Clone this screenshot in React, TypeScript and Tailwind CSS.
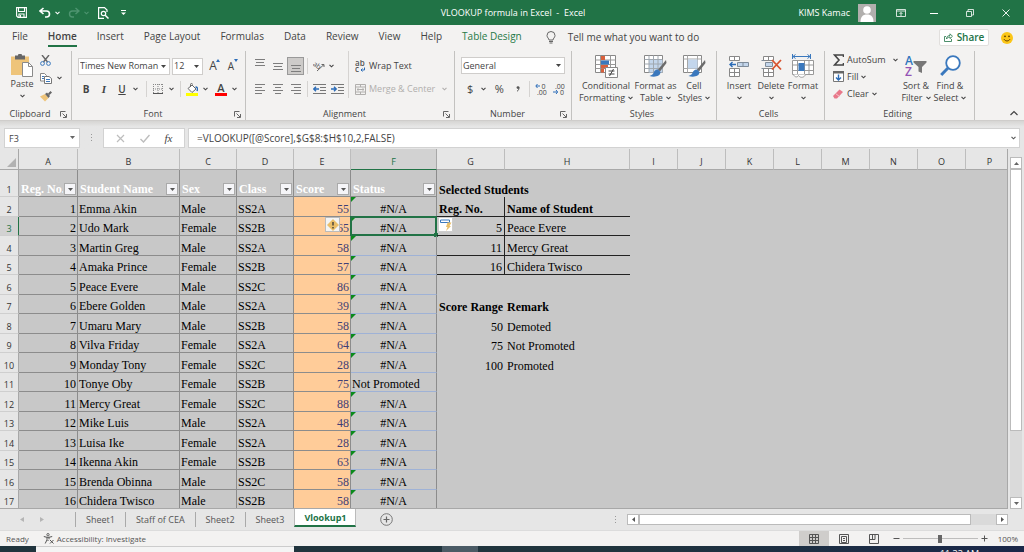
import type { ReactNode } from "react";
import { clsx } from "clsx";

type Student = [name: string, sex: string, cls: string, score: number];

const students: Student[] = [
  ["Emma Akin", "Male", "SS2A", 55],
  ["Udo Mark", "Female", "SS2B", 65],
  ["Martin Greg", "Male", "SS2A", 58],
  ["Amaka Prince", "Female", "SS2B", 57],
  ["Peace Evere", "Male", "SS2C", 86],
  ["Ebere Golden", "Male", "SS2A", 39],
  ["Umaru Mary", "Male", "SS2B", 58],
  ["Vilva Friday", "Female", "SS2A", 64],
  ["Monday Tony", "Female", "SS2C", 28],
  ["Tonye Oby", "Female", "SS2B", 75],
  ["Mercy Great", "Female", "SS2C", 88],
  ["Mike Luis", "Male", "SS2A", 48],
  ["Luisa Ike", "Female", "SS2A", 28],
  ["Ikenna Akin", "Female", "SS2B", 63],
  ["Brenda Obinna", "Male", "SS2C", 58],
  ["Chidera Twisco", "Male", "SS2B", 58],
];

// G/H values by sheet row
const side: Record<number, [string, string]> = {
  2: ["Reg. No.", "Name of Student"],
  3: ["5", "Peace Evere"],
  4: ["11", "Mercy Great"],
  5: ["16", "Chidera Twisco"],
  7: ["Score Range", "Remark"],
  8: ["50", "Demoted"],
  9: ["75", "Not Promoted"],
  10: ["100", "Promoted"],
};

const columns = [
  { id: "A", width: "w-[59px]" },
  { id: "B", width: "w-[102px]" },
  { id: "C", width: "w-[57px]" },
  { id: "D", width: "w-[57px]" },
  { id: "E", width: "w-[57px]" },
  { id: "F", width: "w-[86px]" },
  { id: "G", width: "w-[68px]" },
  { id: "H", width: "w-[125px]" },
  { id: "I", width: "w-[48px]" },
  { id: "J", width: "w-[48px]" },
  { id: "K", width: "w-[48px]" },
  { id: "L", width: "w-[48px]" },
  { id: "M", width: "w-[48px]" },
  { id: "N", width: "w-[48px]" },
  { id: "O", width: "w-[48px]" },
  { id: "P", width: "w-[48px]" },
];

const tableHeads = ["Reg. No.", "Student Name", "Sex", "Class", "Score", "Status"];
const ribbonTabs = ["File", "Home", "Insert", "Page Layout", "Formulas", "Data", "Review", "View", "Help", "Table Design"];
const sheets = ["Sheet1", "Staff of CEA", "Sheet2", "Sheet3"];

function Svg({ w, h, children, className }: { w: number; h: number; children: ReactNode; className?: string }) {
  return (
    <svg width={w} height={h} viewBox={`0 0 ${w} ${h}`} fill="none" className={clsx("shrink-0", className)} aria-hidden="true">
      {children}
    </svg>
  );
}

function Chevron({ className }: { className?: string }) {
  return (
    <Svg w={5} h={4} className={className}>
      <path d="M.5 .8 2.5 2.8 4.5 .8" stroke="currentColor" strokeWidth="1.1" />
    </Svg>
  );
}

function Triangle({ className }: { className?: string }) {
  return (
    <Svg w={5} h={3} className={className}>
      <path d="M0 0h5L2.5 3z" fill="currentColor" />
    </Svg>
  );
}

function IconButton({ label, children, className }: { label: string; children: ReactNode; className?: string }) {
  return (
    <button type="button" aria-label={label} className={clsx("flex shrink-0 items-center justify-center", className)}>
      {children}
    </button>
  );
}

function Launcher() {
  return (
    <Svg w={7} h={7}>
      <path d="M.5 5.5v-5h5M2.5 2.5l3.5 3.5M6.5 3v3.5H3" stroke="#555" strokeWidth=".9" />
    </Svg>
  );
}

function Group({ label, width, launcher, children }: { label: string; width: string; launcher?: boolean; children: ReactNode }) {
  return (
    <section aria-label={label} className={clsx("flex shrink-0 flex-col border-r border-[#c3c2c0]", width)}>
      <div className="flex flex-1 items-start">{children}</div>
      <div className="flex h-3 items-center pr-1">
        <span className="flex-1 text-center">{label}</span>
        {launcher && (
          <IconButton label={`${label} settings`}>
            <Launcher />
          </IconButton>
        )}
      </div>
    </section>
  );
}

function Sep() {
  return <span className="h-4 w-px shrink-0 bg-[#d5d3d1]" />;
}

function Lines({ d }: { d: string }) {
  return (
    <Svg w={12} h={10}>
      <path d={d} stroke="#7d7d7d" />
    </Svg>
  );
}

function Indent({ flip }: { flip?: boolean }) {
  return (
    <Svg w={13} h={11}>
      <path d="M0 .5h13M7 3.5h6M7 6.5h6M0 9.5h13" stroke="#777" />
      <path d={flip ? "M0 5h5M3 2.8 5.2 5 3 7.2" : "M1 5h5M3 2.8.8 5 3 7.2"} stroke="#2b6cb8" strokeWidth="1.4" />
    </Svg>
  );
}

function BigButton({ top, bottom, icon, className }: { top: string; bottom?: string; icon: ReactNode; className: string }) {
  return (
    <button type="button" className={clsx("flex shrink-0 flex-col items-center leading-3", className)}>
      <span className="flex h-6 items-center">{icon}</span>
      <span className="mt-[2px] whitespace-nowrap">{top}</span>
      <span className="flex h-3 items-center gap-[3px] whitespace-nowrap">
        {bottom}
        <Chevron />
      </span>
    </button>
  );
}

function TitleBar() {
  return (
    <header className="flex h-[25px] shrink-0 items-center bg-[#217346] text-white">
      <div className="flex flex-1 items-center pl-4">
        <IconButton label="Save">
          <Svg w={11} h={11}>
            <path d="M.6.6h9.8v9.8H2L.6 9zM2.5 1v3.500h6V1M3 10V7h5v3M4.500 8v2" stroke="#fff" strokeWidth="1.1" />
          </Svg>
        </IconButton>
        <IconButton label="Undo" className="ml-3 gap-1">
          <Svg w={12} h={11}>
            <path d="M4.5 1 1 4l3.500 3M1.200 4H7.500a3 3 0 0 1 0 6H6" stroke="#fff" strokeWidth="1.6" />
          </Svg>
          <Chevron />
        </IconButton>
        <IconButton label="Redo" className="ml-2 gap-1 text-[#4e9470]">
          <Svg w={12} h={11}>
            <path d="M7.5 1 11 4 7.500 7M10.800 4H4.500a3 3 0 0 0 0 6H6" stroke="currentColor" strokeWidth="1.4" />
          </Svg>
          <Chevron />
        </IconButton>
        <IconButton label="Print Preview" className="ml-2">
          <Svg w={12} h={12}>
            <path d="M10 5V3L7.500.6H1.600v10.800H7" stroke="#fff" strokeWidth="1.2" />
            <circle cx="6.5" cy="6.5" r="2.2" stroke="#fff" strokeWidth="1.2" />
            <path d="m8.200 8.200 3.300 3.300" stroke="#fff" strokeWidth="1.5" />
          </Svg>
        </IconButton>
        <IconButton label="Customize toolbar" className="ml-3">
          <Svg w={5} h={6}>
            <path d="M0 .5h5" stroke="#fff" />
            <path d="M0 2.5h5L2.500 5z" fill="#fff" />
          </Svg>
        </IconButton>
      </div>
      <h1 className="text-[9px]">VLOOKUP formula in Excel&nbsp; -&nbsp; Excel</h1>
      <div className="flex flex-1 items-center justify-end pr-[14px]">
        <span className="mr-2 text-[9px]">KIMS Kamac</span>
        <Svg w={18} h={18} className="mr-5">
          <rect width="18" height="18" fill="#b1afad" />
          <circle cx="9" cy="6" r="3.8" fill="#fff" />
          <path d="M2.500 18c0-5 2-7.500 6.500-7.500s6.500 2.500 6.500 7.500z" fill="#fff" />
        </Svg>
        <IconButton label="Ribbon display options" className="mr-6">
          <Svg w={10} h={8}>
            <path d="M.5.5h9v7h-9zM.5 2h9M5 7V3.500M3.500 5 5 3.500 6.500 5" stroke="#fff" strokeWidth=".8" />
          </Svg>
        </IconButton>
        <IconButton label="Minimize" className="mr-7">
          <Svg w={8} h={8}>
            <path d="M0 4.500h8" stroke="#fff" />
          </Svg>
        </IconButton>
        <IconButton label="Restore" className="mr-7">
          <Svg w={8} h={8}>
            <path d="M.5 2.500h5v5h-5zM2 2.500V.5h5.500V6H5.500" stroke="#fff" strokeWidth=".8" />
          </Svg>
        </IconButton>
        <IconButton label="Close">
          <Svg w={8} h={8}>
            <path d="m.5.5 7 7m0-7-7 7" stroke="#fff" strokeWidth=".9" />
          </Svg>
        </IconButton>
      </div>
    </header>
  );
}

function TabBar() {
  return (
    <nav className="flex h-[25px] shrink-0 items-center pr-2 pl-3 text-[10px]">
      <div className="flex gap-5">
        {ribbonTabs.map((t) => (
          <button
            key={t}
            type="button"
            className={clsx(
              "h-[19px] border-b-2 whitespace-nowrap",
              t === "Home" ? "border-[#217346] font-semibold text-[#444]" : "border-transparent",
              t === "Table Design" && "text-[#1f7a47]"
            )}
          >
            {t}
          </button>
        ))}
      </div>
      <button type="button" className="ml-6 flex items-center gap-3 whitespace-nowrap">
        <Svg w={10} h={13}>
          <path d="M3 9C3 7.500 1 6.500 1 4.500a4 4 0 0 1 8 0C9 6.500 7 7.500 7 9zM3 10.500h4M3.500 12h3" stroke="#666" />
        </Svg>
        Tell me what you want to do
      </button>
      <button
        type="button"
        className="ml-auto flex h-[17px] w-[50px] items-center justify-center gap-1 rounded-xs border border-[#e1dfdd] bg-white font-semibold text-[#217346]"
      >
        <Svg w={9} h={9}>
          <path d="M2 3.500H.5v5h7V6M2.500 6c0-2.500 1.500-3.500 3.500-3.500V.8L8.500 3.300 6 5.600V4C4.500 4 3.300 4.500 2.500 6z" stroke="#217346" strokeWidth=".8" />
        </Svg>
        Share
      </button>
      <IconButton label="Feedback" className="mr-[3px] ml-3">
        <Svg w={12} h={12}>
          <circle cx="6" cy="6" r="6" fill="#fbc618" />
          <circle cx="4" cy="4.3" r=".9" fill="#5b3b00" />
          <circle cx="8" cy="4.3" r=".9" fill="#5b3b00" />
          <path d="M3 7.200c1.500 2.300 4.500 2.300 6 0" stroke="#5b3b00" />
        </Svg>
      </IconButton>
    </nav>
  );
}

function Ribbon() {
  return (
    <div className="flex h-[70px] shrink-0 overflow-hidden pt-px text-[9px]">
      <Group label="Clipboard" width="w-[72px]" launcher>
        <button type="button" aria-label="Paste" className="ml-1 flex w-9 flex-col items-center pt-[3px]">
          <Svg w={22} h={23}>
            <path d="M0 2.500h18V21H0z" fill="#eec47a" />
            <path d="M4 1.500h3a2 2 0 0 1 4 0h3v4H4z" fill="#666" />
            <path d="M11.500 8.500h6l4 4v10h-10z" fill="#fff" stroke="#8a8a8a" />
            <path d="M17.500 8.500v4h4" stroke="#8a8a8a" />
          </Svg>
          <span className="mt-px leading-3">Paste</span>
          <Chevron className="mt-1" />
        </button>
        <div className="flex flex-col items-start gap-1 pt-[3px]">
          <IconButton label="Cut" className="h-[13px]">
            <Svg w={11} h={11}>
              <path d="m2 0 5.500 7M9 0 3.500 7" stroke="#666" strokeWidth="1.4" />
              <circle cx="2.5" cy="8.5" r="1.9" stroke="#3a78bd" />
              <circle cx="8.5" cy="8.5" r="1.9" stroke="#3a78bd" />
            </Svg>
          </IconButton>
          <IconButton label="Copy" className="h-[14px] gap-[5px]">
            <Svg w={12} h={11}>
              <path d="M.5.5h4l2 2V8h-6z" fill="#fff" stroke="#888" />
              <path d="M4.500 3.500H9l2.500 2v5h-7z" fill="#fff" stroke="#777" />
              <path d="M6 6.500h4M6 8.500h4M2 3.500h2M2 5.500h2" stroke="#3a78bd" />
            </Svg>
            <Chevron />
          </IconButton>
          <IconButton label="Format Painter" className="h-[14px]">
            <Svg w={12} h={11}>
              <path d="M0 5.500 5 3l3.500 4L5 10.500z" fill="#eec47a" />
              <path d="m5 3 2-1.500L10 5 8.500 7zM8 2.500 10.500 0 12 1.500 9.500 4z" fill="#666" />
            </Svg>
          </IconButton>
        </div>
      </Group>

      <Group label="Font" width="w-[174px]" launcher>
        <div className="flex flex-col gap-[5px] pt-[6px] pl-[6px]">
          <div className="flex h-[18px] items-center">
            <div className="relative flex">
              <select aria-label="Font name" className="h-[17px] w-[92px] appearance-none border border-[#cfcdcb] bg-white pl-px text-[9px]">
                <option>Times New Roman</option>
              </select>
              <Triangle className="pointer-events-none absolute top-[7px] right-1" />
            </div>
            <div className="relative ml-[2px] flex">
              <select aria-label="Font size" className="h-[17px] w-[31px] appearance-none border border-[#cfcdcb] bg-white pl-px text-[9px]">
                <option>12</option>
              </select>
              <Triangle className="pointer-events-none absolute top-[7px] right-1" />
            </div>
            <IconButton label="Increase font size" className="relative ml-1 w-3 text-[12px]">
              A
              <Svg w={4} h={3} className="absolute top-[2px] -right-px">
                <path d="M2 0l2 3H0z" fill="#2b6cb8" />
              </Svg>
            </IconButton>
            <IconButton label="Decrease font size" className="relative ml-[6px] w-3 text-[10px]">
              A
              <Svg w={4} h={3} className="absolute top-0 -right-px">
                <path d="M0 0h4L2 3z" fill="#2b6cb8" />
              </Svg>
            </IconButton>
          </div>
          <div className="flex h-[18px] items-center pl-1">
            <button type="button" className="w-2 text-[10px] font-bold">B</button>
            <button type="button" className="ml-[10px] w-2 font-['Liberation_Serif',serif] text-[11px] font-bold italic">I</button>
            <button type="button" className="ml-[10px] w-2 text-[10px] font-semibold underline">U</button>
            <Chevron className="ml-[7px]" />
            <span className="w-2" />
            <Sep />
            <IconButton label="Borders" className="ml-[6px] gap-[6px]">
              <Svg w={10} h={10}>
                <path d="M.5 0v9M9.500 0v9M5 0v9M0 .5h10M0 5h10" stroke="#888" strokeDasharray="1 1" />
                <path d="M0 9.500h10" stroke="#555" />
              </Svg>
              <Chevron />
            </IconButton>
            <span className="w-[6px]" />
            <Sep />
            <IconButton label="Fill Color" className="ml-[5px] gap-[5px]">
              <Svg w={12} h={13}>
                <path d="m2 5.500 4-3.500 4 4-4 3.500z" fill="#fff" stroke="#666" />
                <path d="M4.500 4V1.500a1 1 0 0 1 2 0" stroke="#666" />
                <path d="M9.500 4c2 0 2.500 1.500 1.500 4" stroke="#2b6cb8" strokeWidth="1.4" />
                <path d="M0 10h12v3H0z" fill="#ffff00" />
              </Svg>
              <Chevron />
            </IconButton>
            <IconButton label="Font Color" className="ml-[7px] gap-[5px]">
              <span className="flex h-[13px] w-3 items-center justify-center border-b-3 border-[#ff0000] text-[11px] leading-none font-semibold">A</span>
              <Chevron />
            </IconButton>
          </div>
        </div>
      </Group>

      <Group label="Alignment" width="w-[209px]" launcher>
        <div className="flex flex-col gap-[5px] pt-[6px] pl-[5px]">
          <div className="flex h-[18px] items-center">
            <IconButton label="Top Align" className="h-[18px] w-[18px] items-start pt-[2px]">
              <Lines d="M1 .5h10M2 3.5h8M1 6.5h10" />
            </IconButton>
            <IconButton label="Middle Align" className="w-[18px]">
              <Lines d="M1 2.500h10M2 5.500h8M1 8.500h10" />
            </IconButton>
            <IconButton label="Bottom Align" className="h-[18px] w-[17px] items-end border border-[#999] bg-[#cdcbc9] pb-[2px]">
              <Lines d="M1 3.500h10M2 6.500h8M1 9.500h10" />
            </IconButton>
            <span className="w-[3px]" />
            <Sep />
            <IconButton label="Orientation" className="ml-[5px] gap-1">
              <Svg w={12} h={12}>
                <text x="0" y="7" fontSize="7" fill="#555" transform="rotate(35 3 5)">ab</text>
                <path d="M4 11 11 4.500M8.500 4.500H11V7" stroke="#666" />
              </Svg>
              <Chevron />
            </IconButton>
          </div>
          <div className="flex h-[18px] items-center">
            <IconButton label="Align Left" className="w-[18px]">
              <Lines d="M1 .5h10M1 3.500h7M1 6.500h10M1 9.500h7" />
            </IconButton>
            <IconButton label="Center" className="w-[18px]">
              <Lines d="M1 .5h10M3 3.500h6M1 6.500h10M3 9.500h6" />
            </IconButton>
            <IconButton label="Align Right" className="w-[17px]">
              <Lines d="M1 .5h10M4 3.500h7M1 6.500h10M4 9.500h7" />
            </IconButton>
            <span className="w-[3px]" />
            <Sep />
            <IconButton label="Decrease Indent" className="ml-[5px]">
              <Indent />
            </IconButton>
            <IconButton label="Increase Indent" className="ml-[5px]">
              <Indent flip />
            </IconButton>
          </div>
        </div>
        <div className="ml-1 flex flex-col gap-[5px] border-l border-[#d5d3d1] pt-[6px] pl-[6px]">
          <button type="button" className="flex h-[18px] items-center gap-[3px] whitespace-nowrap">
            <Svg w={11} h={13}>
              <text x="0" y="6" fontSize="8" fontWeight="600" fill="#555">ab</text>
              <text x="0" y="12" fontSize="8" fontWeight="600" fill="#555">c</text>
              <path d="M9.500 7.500V10H6M7.500 8.500 6 10l1.500 1.500" stroke="#2b6cb8" />
            </Svg>
            Wrap Text
          </button>
          <button type="button" disabled className="flex h-[18px] items-center gap-[3px] whitespace-nowrap text-[#b1afad]">
            <Svg w={11} h={11}>
              <path d="M.5.5h10v10H.5zM.5 3h10M.5 8h10M5.500.5V3M5.500 8v2.500M2 5.500h7M3.500 4.300 2 5.500l1.500 1.200M7.500 4.300 9 5.500 7.500 6.700" stroke="currentColor" />
            </Svg>
            Merge &amp; Center
            <Chevron className="ml-1" />
          </button>
        </div>
      </Group>

      <Group label="Number" width="w-[117px]" launcher>
        <div className="flex flex-1 flex-col gap-[5px] px-[6px] pt-[6px]">
          <div className="relative flex h-[18px]">
            <select aria-label="Number format" className="h-[17px] w-full appearance-none border border-[#cfcdcb] bg-white pl-px text-[9px]">
              <option>General</option>
            </select>
            <Triangle className="pointer-events-none absolute top-[7px] right-1" />
          </div>
          <div className="flex h-[18px] items-center pl-[6px] text-[11px]">
            <IconButton label="Accounting format" className="gap-2">
              $<Chevron />
            </IconButton>
            <button type="button" className="ml-2 w-[10px]">%</button>
            <IconButton label="Comma Style" className="ml-3">
              <Svg w={4} h={6}>
                <circle cx="2" cy="1.6" r="1.4" fill="#555" />
                <path d="M3 1.500C3 3.500 2.300 4.500 1 5.300" stroke="#555" />
              </Svg>
            </IconButton>
            <span className="w-[9px]" />
            <Sep />
            <IconButton label="Increase Decimal" className="ml-[5px]">
              <Svg w={12} h={13}>
                <text x="6.5" y="5.5" fontSize="7" fill="#444">0</text>
                <text x="2" y="12" fontSize="7" fill="#444">.00</text>
                <path d="M1 3h4M2.500 1 .8 3l1.700 2" stroke="#2b6cb8" />
              </Svg>
            </IconButton>
            <IconButton label="Decrease Decimal" className="ml-[6px]">
              <Svg w={12} h={13}>
                <text x="2" y="5.5" fontSize="7" fill="#444">.00</text>
                <text x="7" y="12" fontSize="7" fill="#444">0</text>
                <path d="M0 9h4M3 7l1.700 2L3 11" stroke="#2b6cb8" />
              </Svg>
            </IconButton>
          </div>
        </div>
      </Group>

      <Group label="Styles" width="w-[145px]">
        <div className="flex pt-[3px] pl-[6px]">
          <BigButton
            className="w-[56px]"
            top="Conditional"
            bottom="Formatting"
            icon={
              <Svg w={23} h={23}>
                <path d="M.5.5h20v17H.5z" fill="#fff" stroke="#888" />
                <path d="M.5 5h20M.5 9.500h20M.5 13.500h20M5.500.5v17M15.500.5v17" stroke="#999" />
                <path d="M6 1h4v4H6zM6 10h7v3.500H6zM6 14h3v3.500H6z" fill="#d8603c" />
                <path d="M6 5.500h8v4H6z" fill="#3a78bd" />
                <path d="M10.500 12.500h12v10h-12z" fill="#fff" stroke="#888" />
                <path d="M13.500 16h6M13.500 19h6M18.500 14l-4 7" stroke="#444" />
              </Svg>
            }
          />
          <BigButton
            className="w-[43px]"
            top="Format as"
            bottom="Table"
            icon={
              <Svg w={23} h={22}>
                <path d="M.5.5h18v17H.5z" fill="#fff" stroke="#888" />
                <path d="M5 5h13.500v12.500H5z" fill="#c3d6ec" />
                <path d="M.5 4.500h18M.5 9h18M.5 13.500h18M5 .5v17M9.500.5v17M14 .5v17" stroke="#a0a8b0" />
                <path d="m22 5-8 9.500 2 2L22.500 8z" fill="#6b6b6b" />
                <path d="M14 14.500c-3 0-4 2-4.500 3.500-1 2-2.500 2.500-4 3 5 1.500 11 .5 11-4z" fill="#3a78bd" />
              </Svg>
            }
          />
          <BigButton
            className="w-[34px]"
            top="Cell"
            bottom="Styles"
            icon={
              <Svg w={23} h={22}>
                <path d="M.5.5h18v17H.5z" fill="#fff" stroke="#888" />
                <path d="M.5 4h18M.5 13.500h18M4.500.5v17M14.500.5v17" stroke="#a8a8a8" />
                <path d="M5 4.500h9.500v9H5z" fill="#c3d6ec" />
                <path d="m22 5-8 9.500 2 2L22.500 8z" fill="#6b6b6b" />
                <path d="M14 14.500c-3 0-4 2-4.500 3.500-1 2-2.500 2.500-4 3 5 1.500 11 .5 11-4z" fill="#3a78bd" />
              </Svg>
            }
          />
        </div>
      </Group>

      <Group label="Cells" width="w-[108px]">
        <div className="flex pt-[3px] pl-[6px]">
          <BigButton
            className="w-8"
            top="Insert"
            icon={
              <Svg w={20} h={21}>
                <path d="M.5.5h10v4H.5zM5.500.5v4M.5 12.500h10v8H.5zM.5 16.500h10M5.500 12.500v8" fill="#fff" stroke="#888" />
                <path d="M8.500 6.500h11v4h-11zM14 6.500v4" fill="#c3d6ec" stroke="#7f8c9a" />
                <path d="M1 8.500h6M3.500 6 1 8.500 3.500 11" stroke="#2b6cb8" strokeWidth="1.4" />
              </Svg>
            }
          />
          <BigButton
            className="w-8"
            top="Delete"
            icon={
              <Svg w={21} h={21}>
                <path d="M2.500.5h10v4h-10zM7.500.5v4M2.500 12.500h10v8h-10zM2.500 16.500h10M7.500 12.500v8" fill="#fff" stroke="#888" />
                <path d="M.5 4.500h3M.5 12.500h3M4.500 6.500h7v4h-7z" fill="#c3d6ec" stroke="#7f8c9a" />
                <path d="m11 4 9 9.500M20 4l-9 9.500" stroke="#d8532f" strokeWidth="1.8" />
              </Svg>
            }
          />
          <BigButton
            className="w-8"
            top="Format"
            icon={
              <Svg w={22} h={24}>
                <path d="M1 2.500h17M3.500.5 1 2.500l2.500 2M15.500.5l2.500 2-2.500 2M.5 0v5M18.500 0v5" stroke="#3a78bd" />
                <path d="M.5 6.500h21v14H.5zM.5 11h21M.5 16.500h21M5.500 6.500v14M12.500 6.500v14M17 6.500v14" fill="#fff" stroke="#999" />
                <path d="M6.500 9h6v8h-6z" fill="#3a78bd" />
                <path d="M1.500 20.500c1 3 4 3 5 1 2 3 6 2 7-1" fill="#fff" stroke="#999" />
              </Svg>
            }
          />
        </div>
      </Group>

      <Group label="Editing" width="w-[150px]">
        <div className="flex w-[73px] flex-col items-start pl-2 leading-none">
          <button type="button" className="flex h-[17px] w-full items-center whitespace-nowrap">
            <Svg w={11} h={12} className="mr-[3px]">
              <path d="M10.500 3V1H1.500L6 6l-4.500 5h9V9" stroke="#444" strokeWidth="1.6" />
            </Svg>
            AutoSum
            <Chevron className="ml-auto" />
          </button>
          <button type="button" className="flex h-[17px] items-center gap-[3px]">
            <Svg w={11} h={11}>
              <path d="M.5.5h10v10H.5z" fill="#fff" stroke="#777" />
              <path d="M0 0h11v2.500H0z" fill="#666" />
              <path d="M5.500 3.500V9M3 6.500 5.500 9 8 6.500" stroke="#2b6cb8" strokeWidth="1.4" />
            </Svg>
            Fill
            <Chevron />
          </button>
          <button type="button" className="flex h-[17px] items-center gap-[3px]">
            <Svg w={11} h={10}>
              <path d="M0 7 6.500.5 10 3 4 9.500H1.500z" fill="#e8788a" />
              <path d="m2.500 4.500 4 3" stroke="#f6c3cb" />
            </Svg>
            Clear
            <Chevron />
          </button>
        </div>
        <div className="flex gap-px pt-[3px] pl-[2px]">
          <BigButton
            className="w-8"
            top="Sort &"
            bottom="Filter"
            icon={
              <Svg w={22} h={22}>
                <text x="0" y="9.5" fontSize="12" fontWeight="600" fill="#2f75bd">A</text>
                <text x="0" y="20.5" fontSize="12" fontWeight="600" fill="#9353b5">Z</text>
                <path d="M8.500 6h13v1.500L17 12v6l-3.500-1.500V12L8.500 7.500z" fill="#777" />
              </Svg>
            }
          />
          <BigButton
            className="w-[34px]"
            top="Find &"
            bottom="Select"
            icon={
              <Svg w={21} h={22}>
                <circle cx="13" cy="8" r="6.8" fill="#fff" stroke="#3a78bd" strokeWidth="1.8" />
                <path d="M8 13 1.200 20" stroke="#3a78bd" strokeWidth="3" />
              </Svg>
            }
          />
        </div>
      </Group>

      <div className="flex flex-1 items-end justify-end pr-[6px] pb-1">
        <IconButton label="Collapse the Ribbon">
          <Svg w={8} h={6}>
            <path d="m.5 5 3.500-3.500L7.500 5" stroke="#444" strokeWidth="1.2" />
          </Svg>
        </IconButton>
      </div>
    </div>
  );
}

function FormulaBar() {
  return (
    <div className="flex h-[29px] shrink-0 items-end border-t border-[#cfcdcb] bg-linear-to-b from-[#d6d5d3] to-[#e6e6e6] to-20% pr-1 pb-px pl-1 text-[9px]">
      <div className="relative flex h-5 w-[76px]">
        <input aria-label="Name Box" defaultValue="F3" className="h-5 w-full border border-[#d2d2d2] bg-white px-1" />
        <Triangle className="absolute top-2 right-[5px] text-[#666]" />
      </div>
      <Svg w={3} h={20} className="mx-[10px]">
        <path d="M1.500 6v9" stroke="#999" strokeDasharray="1 2" />
      </Svg>
      <div className="flex h-5 w-[82px] items-center justify-around border border-[#d2d2d2] bg-white px-1">
        <IconButton label="Cancel">
          <Svg w={9} h={9}>
            <path d="m1 1 7 7m0-7L1 8" stroke="#bdbdbd" strokeWidth="1.2" />
          </Svg>
        </IconButton>
        <IconButton label="Enter">
          <Svg w={10} h={9}>
            <path d="m.5 5 3 3L9.500 1" stroke="#bdbdbd" strokeWidth="1.4" />
          </Svg>
        </IconButton>
        <button type="button" className="font-['Liberation_Serif',serif] text-[11px] leading-none italic">
          fx
        </button>
      </div>
      <div className="relative ml-[3px] flex h-5 flex-1">
        <input
          aria-label="Formula Bar"
          defaultValue="=VLOOKUP([@Score],$G$8:$H$10,2,FALSE)"
          className="h-5 w-full border border-[#d2d2d2] bg-white px-2 text-[10px]"
        />
        <Chevron className="absolute top-2 right-1 text-[#555]" />
      </div>
    </div>
  );
}

function ErrorMark() {
  return (
    <Svg w={5} h={5} className="absolute top-0 left-0">
      <path d="M0 0h5L0 5z" fill="#0a8a1c" />
    </Svg>
  );
}

function RowHead({ n }: { n: number }) {
  return (
    <th
      scope="row"
      className={clsx(
        "border-r border-b border-b-[#cfcfcf] p-0 text-center align-bottom font-['Open_Sans',sans-serif] text-[9px] leading-3 font-normal",
        n === 3 ? "border-r-[#217346] bg-[#d2d2d2] text-[#217346]" : "border-r-[#a8a8a8] bg-[#e6e6e6] text-[#333]"
      )}
    >
      {n}
    </th>
  );
}

const grid = "border-r border-b border-[#8c8c8c] px-px py-0 align-bottom whitespace-nowrap";

function SheetRow({ n, student }: { n: number; student: Student }) {
  const [name, sex, cls, score] = student;
  const [left, right] = side[n] ?? ["", ""];
  const boxed = n >= 2 && n <= 5;
  const bold = n === 2 || n === 7;
  const promoted = n === 11;
  return (
    <tr className={n % 2 === 0 ? "h-5" : "h-[19px]"}>
      <RowHead n={n} />
      <td className={clsx(grid, "text-right")}>{n - 1}</td>
      <td className={grid}>{name}</td>
      <td className={grid}>{sex}</td>
      <td className={grid}>{cls}</td>
      <td className={clsx(grid, "relative bg-[#ffcc99] text-right text-[#3f3f76]")}>
        {score}
        {n === 3 && (
          <button
            type="button"
            aria-label="Error options"
            className="absolute top-0 left-[31px] flex h-[15px] w-[15px] items-center justify-center border border-[#bbb] bg-[#f4f4f4]"
          >
            <Svg w={12} h={12}>
              <path d="m6 0 6 6-6 6-6-6z" fill="#eabf6a" />
              <path d="M6 3v3.500M6 8v1.500" stroke="#333" strokeWidth="1.3" />
            </Svg>
          </button>
        )}
      </td>
      <td
        className={clsx(
          "relative border-r border-b px-px py-0 align-bottom whitespace-nowrap",
          n === 2 || n === 3 ? "border-[#217346] border-r-[#8c8c8c]" : "border-r-[#8c8c8c] border-b-[#9fb2d6]",
          !promoted && "text-center"
        )}
      >
        {promoted ? "Not Promoted" : "#N/A"}
        {!promoted && <ErrorMark />}
        {n === 3 && (
          <span className="absolute -inset-px border-2 border-[#217346]">
            <span className="absolute -right-[3px] -bottom-[3px] h-1 w-1 bg-[#217346]" />
          </span>
        )}
      </td>
      <td
        className={clsx(
          "relative px-[2px] py-0 align-bottom whitespace-nowrap",
          boxed && "border-r border-b border-[#222]",
          bold ? "font-bold" : "text-right"
        )}
      >
        {left}
        {n === 3 && (
          <button
            type="button"
            aria-label="Paste options"
            className="absolute top-0 left-px flex h-[15px] w-[15px] items-center justify-center border border-[#ccc] bg-white"
          >
            <Svg w={12} h={12}>
              <path d="M.5 1h9v2.500h-9z" fill="#fff" stroke="#3a78bd" />
              <path d="M7.500 3.500h4L9.500 7H11l-5 5 1.500-4H6z" fill="#eabf6a" />
            </Svg>
          </button>
        )}
      </td>
      <td className={clsx("px-[2px] py-0 align-bottom whitespace-nowrap", boxed && "border-b border-[#222]", bold && "font-bold")}>{right}</td>
      <td colSpan={8} />
    </tr>
  );
}

function Sheet() {
  return (
    <div className="flex min-h-0 flex-1 bg-[#e6e6e6]">
      <div className="min-w-0 flex-1 overflow-hidden border-r border-b border-[#a8a8a8] bg-linear-to-b from-[#e6e6e6] from-[21px] to-[#c8c8c8] to-[21px]">
        <table className="w-[1014px] table-fixed border-separate border-spacing-0 font-['Liberation_Serif','Times_New_Roman',serif] text-[12px] leading-[13px] text-black">
          <colgroup>
            <col className="w-[19px]" />
            {columns.map((c) => (
              <col key={c.id} className={c.width} />
            ))}
          </colgroup>
          <thead className="font-['Open_Sans',sans-serif] text-[9px] text-[#333]">
            <tr className="h-[21px]">
              <th aria-label="Select all" className="border-r border-b border-[#a8a8a8] bg-[#e6e6e6] p-0 align-bottom">
                <Svg w={9} h={9} className="mb-[2px] ml-[7px]">
                  <path d="M9 0v9H0z" fill="#b2b2b2" />
                </Svg>
              </th>
              {columns.map((c) => (
                <th
                  key={c.id}
                  scope="col"
                  className={clsx(
                    "border-r border-b px-0 pt-[5px] pb-0 font-normal",
                    c.id === "F"
                      ? "border-r-[#a8a8a8] border-b-[#217346] bg-[#d2d2d2] text-[#217346]"
                      : "border-r-[#bdbdbd] border-b-[#a8a8a8] bg-[#e6e6e6]"
                  )}
                >
                  {c.id}
                </th>
              ))}
            </tr>
          </thead>
          <tbody>
            <tr className="h-[27px]">
              <RowHead n={1} />
              {tableHeads.map((h) => (
                <td key={h} className="border-r border-b border-[#8c8c8c] p-0 pl-[2px] align-bottom font-bold text-white">
                  <div className="flex items-end">
                    <span className="flex-1 overflow-hidden whitespace-nowrap">{h}</span>
                    <IconButton label={`Filter ${h}`} className="m-px h-3 w-3 border border-[#aaa] bg-[#f5f5f8] text-[#555]">
                      <Triangle />
                    </IconButton>
                  </div>
                </td>
              ))}
              <td colSpan={2} className="px-[2px] py-0 align-bottom font-bold">
                Selected Students
              </td>
              <td colSpan={8} />
            </tr>
            {students.map((s, i) => (
              <SheetRow key={s[0]} n={i + 2} student={s} />
            ))}
          </tbody>
        </table>
      </div>
      <div className="mr-[2px] ml-[2px] flex w-3 flex-col pt-2">
        <IconButton label="Scroll up" className="h-3 border border-[#bbb] bg-white text-[#666]">
          <Triangle className="rotate-180" />
        </IconButton>
        <div className="flex flex-1 flex-col bg-[#dadada]">
          <div className="h-4/5 border border-[#bbb] bg-white" />
        </div>
        <IconButton label="Scroll down" className="h-3 border border-[#bbb] bg-white text-[#666]">
          <Triangle />
        </IconButton>
      </div>
    </div>
  );
}

function SheetTabs() {
  return (
    <div className="flex h-[21px] shrink-0 bg-[#e6e6e6] text-[9px] text-[#555]">
      <div className="flex w-[75px] items-center gap-4 pl-5 text-[#b5b5b5]">
        <IconButton label="Previous sheet">
          <Svg w={4} h={5}>
            <path d="M4 0v5L0 2.500z" fill="currentColor" />
          </Svg>
        </IconButton>
        <IconButton label="Next sheet">
          <Svg w={4} h={5}>
            <path d="M0 0v5l4-2.500z" fill="currentColor" />
          </Svg>
        </IconButton>
      </div>
      <div className="flex items-center">
        {sheets.map((s) => (
          <button key={s} type="button" className="h-[15px] border-l border-[#aaa] px-[10px] whitespace-nowrap">
            {s}
          </button>
        ))}
      </div>
      <button type="button" className="h-[18px] w-[62px] border-x border-b-2 border-x-[#bbb] border-b-[#217346] bg-white pt-px font-bold text-[#217346]">
        Vlookup1
      </button>
      <IconButton label="New sheet" className="ml-6">
        <Svg w={13} h={13}>
          <circle cx="6.5" cy="6.5" r="5.8" stroke="#777" />
          <path d="M6.500 3.500v6M3.500 6.500h6" stroke="#666" strokeWidth="1.2" />
        </Svg>
      </IconButton>
      <div className="ml-auto flex w-[40%] items-center pr-4">
        <Svg w={3} h={9} className="mr-[10px]">
          <path d="M1.500 1v8" stroke="#999" strokeDasharray="1 2" />
        </Svg>
        <IconButton label="Scroll left" className="h-[11px] w-3 border border-[#bbb] bg-white text-[#555]">
          <Svg w={3} h={5}>
            <path d="M3 0v5L0 2.500z" fill="currentColor" />
          </Svg>
        </IconButton>
        <div className="flex h-[11px] flex-1 bg-[#dadada]">
          <div className="w-[93%] border border-[#bbb] bg-white" />
        </div>
        <IconButton label="Scroll right" className="h-[11px] w-3 border border-[#bbb] bg-white text-[#555]">
          <Svg w={3} h={5}>
            <path d="M0 0v5l3-2.500z" fill="currentColor" />
          </Svg>
        </IconButton>
      </div>
    </div>
  );
}

function StatusBar() {
  return (
    <footer className="flex h-4 shrink-0 items-center border-t border-[#dcdcdc] bg-[#f3f2f1] pr-[6px] pl-[6px] text-[8px] text-[#555]">
      <span>Ready</span>
      <button type="button" className="ml-[14px] flex items-center gap-[3px]">
        <Svg w={11} h={11}>
          <circle cx="5" cy="1.7" r="1.2" stroke="#555" strokeWidth=".9" />
          <path d="M.8 3.500 4 4.300v2.500L2.200 10.500M9.200 3.500 6 4.300v2M4 4.300h2M4.500 7 5.500 8M7 7l3.500 3.500M10.500 7 7 10.500" stroke="#555" />
        </Svg>
        Accessibility: Investigate
      </button>
      <div className="ml-auto flex items-center">
        <IconButton label="Normal view" className="h-[15px] w-[30px] bg-[#cfcdcb]">
          <Svg w={10} h={10}>
            <path d="M.5.5h9v9h-9zM.5 3.500h9M.5 6.500h9M3.500.5v9M6.500.5v9" stroke="#555" />
          </Svg>
        </IconButton>
        <IconButton label="Page layout view" className="h-[15px] w-[30px]">
          <Svg w={10} h={10}>
            <path d="M.5.5h9v9h-9zM2.500 2.500h5v6h-5zM4 4.500h2M4 6.500h2" stroke="#555" />
          </Svg>
        </IconButton>
        <IconButton label="Page break view" className="h-[15px] w-[30px]">
          <Svg w={10} h={10}>
            <path d="M.5.5h9v9h-9zM.5 5.500h5.500v-5M3.500.5v5" stroke="#555" />
          </Svg>
        </IconButton>
        <IconButton label="Zoom out" className="ml-1">
          <Svg w={7} h={7}>
            <path d="M.5 3.500h6" stroke="#555" />
          </Svg>
        </IconButton>
        <input
          type="range"
          aria-label="Zoom"
          min={0}
          max={100}
          defaultValue={50}
          className="mx-[3px] h-[9px] w-[75px] appearance-none bg-linear-to-b from-transparent from-[4px] via-[#888] via-[4px] to-transparent to-[5px] [&::-webkit-slider-thumb]:h-[8px] [&::-webkit-slider-thumb]:w-1 [&::-webkit-slider-thumb]:appearance-none [&::-webkit-slider-thumb]:bg-[#666]"
        />
        <IconButton label="Zoom in">
          <Svg w={7} h={7}>
            <path d="M.5 3.500h6M3.500.5v6" stroke="#555" />
          </Svg>
        </IconButton>
        <span className="ml-[10px]">100%</span>
      </div>
    </footer>
  );
}

export default function App() {
  return (
    <div className="flex h-screen flex-col overflow-hidden bg-[#f3f2f1] font-['Open_Sans','Noto_Sans',sans-serif] text-[#444]">
      <TitleBar />
      <TabBar />
      <Ribbon />
      <FormulaBar />
      <Sheet />
      <SheetTabs />
      <StatusBar />
      <div className="flex h-[6px] shrink-0 overflow-hidden bg-linear-to-r from-[#20343d] from-60% to-[#1a2749] text-[9px] leading-[9px] text-white">
        <span className="w-9" />
        <span className="w-[258px] border-t border-[#ccc] bg-[#f4f4f4]" />
        <span className="ml-[148px] w-9 bg-[#4b5b65]" />
        <span className="ml-auto pt-[3px] pr-[45px]">11:33 AM</span>
      </div>
    </div>
  );
}
